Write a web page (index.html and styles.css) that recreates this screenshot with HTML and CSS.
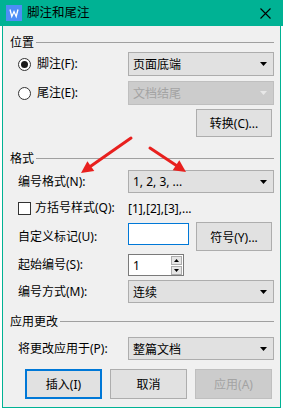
FILE: index.html
```html
<!DOCTYPE html>
<html lang="zh-CN">
<head>
<meta charset="utf-8">
<title>脚注和尾注</title>
<link rel="stylesheet" href="styles.css">
</head>
<body>
<div class="titlebar">
  <span class="appicon"><svg width="16" height="16" viewBox="0 0 16 16"><path d="M4 4.5 L5.8 11.5 L8 6.5 L10.2 11.5 L12 4.5" fill="none" stroke="#fff" stroke-width="1.3" stroke-linejoin="miter"/></svg></span>
  <span class="title">脚注和尾注</span>
  <span class="close"><svg width="11" height="11" viewBox="0 0 11 11"><path d="M0.5 0.5 L10.5 10.5 M10.5 0.5 L0.5 10.5" stroke="#000" stroke-width="1.1"/></svg></span>
</div>
<div class="window">
  <div class="group-head g1"><span>位置</span><i class="rule"></i></div>
  <div class="row r-fn">
    <div class="lbl"><span class="radio checked"></span>脚注(F):</div>
    <div class="select">页面底端<span class="caret"><svg width="7" height="4" viewBox="0 0 7 4"><polygon points="0,0 7,0 3.5,4" fill="#000"/></svg></span></div>
  </div>
  <div class="row r-en">
    <div class="lbl"><span class="radio"></span>尾注(E):</div>
    <div class="select disabled">文档结尾<span class="caret"><svg width="7" height="4" viewBox="0 0 7 4"><polygon points="0,0 7,0 3.5,4" fill="#e8e8e8"/></svg></span></div>
  </div>
  <div class="row r-btn">
    <div class="btn push-right">转换(C)...</div>
  </div>

  <div class="group-head g2"><span>格式</span><i class="rule"></i></div>
  <div class="row r-fmt">
    <div class="lbl">编号格式(N):</div>
    <div class="select">1, 2, 3, ...<span class="caret"><svg width="7" height="4" viewBox="0 0 7 4"><polygon points="0,0 7,0 3.5,4" fill="#000"/></svg></span></div>
  </div>
  <div class="row r-chk">
    <div class="lbl"><span class="checkbox"></span>方括号样式(Q):</div>
    <div class="plain">[1],[2],[3],...</div>
  </div>
  <div class="row r-mark">
    <div class="lbl">自定义标记(U):</div>
    <div class="textbox"></div>
    <div class="btn push-right">符号(Y)...</div>
  </div>
  <div class="row r-start">
    <div class="lbl">起始编号(S):</div>
    <div class="spin">
      <span class="spin-val">1</span>
      <span class="spin-btns">
        <span class="spin-b"><svg width="5" height="3" viewBox="0 0 5 3"><polygon points="0,3 5,3 2.5,0" fill="#000"/></svg></span>
        <span class="spin-b"><svg width="5" height="3" viewBox="0 0 5 3"><polygon points="0,0 5,0 2.5,3" fill="#000"/></svg></span>
      </span>
    </div>
  </div>
  <div class="row r-mode">
    <div class="lbl">编号方式(M):</div>
    <div class="select">连续<span class="caret"><svg width="7" height="4" viewBox="0 0 7 4"><polygon points="0,0 7,0 3.5,4" fill="#000"/></svg></span></div>
  </div>

  <div class="group-head g3"><span>应用更改</span><i class="rule"></i></div>
  <div class="row r-apply">
    <div class="lbl">将更改应用于(P):</div>
    <div class="select">整篇文档<span class="caret"><svg width="7" height="4" viewBox="0 0 7 4"><polygon points="0,0 7,0 3.5,4" fill="#000"/></svg></span></div>
  </div>
  <div class="actions">
    <div class="btn big default">插入(I)</div>
    <div class="btn big">取消</div>
    <div class="btn big disabled">应用(A)</div>
  </div>
</div>
<svg class="arrows" width="283" height="410" viewBox="0 0 283 410">
  <line x1="131" y1="138" x2="91" y2="166" stroke="#e8201e" stroke-width="3" stroke-linecap="round"/>
  <polygon points="81,173 94.3,171 87.4,161.2" fill="#e8201e"/>
  <line x1="150" y1="148" x2="176" y2="165.3" stroke="#e8201e" stroke-width="3" stroke-linecap="round"/>
  <polygon points="186,172 172.7,170.3 179.3,160.3" fill="#e8201e"/>
</svg>
</body>
</html>
```

FILE: styles.css
```css
* { box-sizing: border-box; }
html, body { margin: 0; padding: 0; }
body {
  width: 283px;
  height: 410px;
  background: #ffffff;
  position: relative;
  overflow: hidden;
  font-family: "Noto Sans", "Noto Sans CJK SC", sans-serif;
  font-size: 12px;
  color: #000;
}
.titlebar {
  height: 26px;
  background: #00b294;
  display: flex;
  align-items: center;
}
.appicon {
  width: 16px;
  height: 16px;
  margin-left: 6px;
  background: #4d8ef6;
  display: flex;
}
.title {
  margin-left: 5px;
  font-size: 12.5px;
  line-height: 16px;
}
.close {
  margin-left: auto;
  margin-right: 12px;
  width: 11px;
  height: 11px;
  display: flex;
}
.window {
  margin: 0 2px;
  width: 279px;
  height: 382px;
  background: #f0f0f0;
  border: 1px solid #00b294;
  border-top: 0;
  padding-right: 5px;
  display: flex;
  flex-direction: column;
}
.group-head {
  height: 16px;
  display: flex;
  align-items: center;
  padding-left: 7px;
  line-height: 16px;
}
.group-head .rule {
  flex: 1;
  height: 1px;
  background: #a0a0a0;
  margin-left: 2px;
  margin-right: 1px;
  margin-top: -1px;
}
.g1 { margin-top: 9px; }
.g2 { margin-top: 14px; }
.g3 { margin-top: 11px; }
.row {
  display: flex;
  align-items: center;
  padding-left: 15px;
}
.lbl {
  width: 110px;
  display: flex;
  align-items: center;
  line-height: 16px;
  white-space: nowrap;
}
.r-fn { margin-top: 1px; height: 24px; }
.r-en { margin-top: 5px; height: 24px; }
.r-btn { margin-top: 4px; height: 28px; }
.r-fmt { margin-top: 3px; height: 23px; }
.r-chk { margin-top: 7px; height: 16px; }
.r-mark { margin-top: 6px; height: 29px; }
.r-start { margin-top: 3px; height: 22px; }
.r-mode { margin-top: 4px; height: 23px; }
.r-apply { margin-top: 7px; height: 23px; }
.select {
  width: 146px;
  height: 100%;
  border: 1px solid #adadad;
  background: #e1e1e1;
  display: flex;
  align-items: center;
  padding-left: 4px;
}
.select.disabled {
  background: #cccccc;
  border-color: #bfbfbf;
  color: #a3a3a3;
}
.caret {
  margin-left: auto;
  margin-right: 6px;
  display: flex;
}
.radio {
  width: 13px;
  height: 13px;
  border: 1px solid #333;
  border-radius: 50%;
  background: #fff;
  margin-right: 6px;
  display: flex;
  align-items: center;
  justify-content: center;
}
.radio.checked::after {
  content: "";
  width: 7px;
  height: 7px;
  border-radius: 50%;
  background: #1a1a1a;
}
.checkbox {
  width: 13px;
  height: 13px;
  border: 1px solid #333;
  background: #fff;
  margin-right: 4px;
}
.btn {
  width: 76px;
  height: 100%;
  border: 1px solid #adadad;
  background: #e1e1e1;
  display: flex;
  align-items: center;
  justify-content: center;
}
.push-right { margin-left: auto; margin-right: 3px; }
.textbox {
  width: 61px;
  height: 22px;
  margin-top: -6px;
  border: 1px solid #0078d7;
  background: #fff;
}
.spin {
  width: 56px;
  height: 100%;
  border: 1px solid #7a7a7a;
  background: #fff;
  display: flex;
  align-items: center;
}
.spin-val { padding-left: 4px; }
.spin-btns {
  margin-left: auto;
  margin-right: 1px;
  display: flex;
  flex-direction: column;
  gap: 1px;
}
.spin-b {
  width: 11px;
  height: 9px;
  border: 1px solid #adadad;
  background: #e5e5e5;
  display: flex;
  align-items: center;
  justify-content: center;
}
.actions {
  margin-top: 9px;
  height: 30px;
  display: flex;
  gap: 8px;
  padding-left: 22px;
}
.btn.big { width: 77px; }
.btn.default { border: 2px solid #0078d7; }
.btn.disabled {
  background: #cccccc;
  border-color: #bfbfbf;
  color: #a3a3a3;
}
.arrows {
  position: absolute;
  left: 0;
  top: 0;
  pointer-events: none;
}
```
